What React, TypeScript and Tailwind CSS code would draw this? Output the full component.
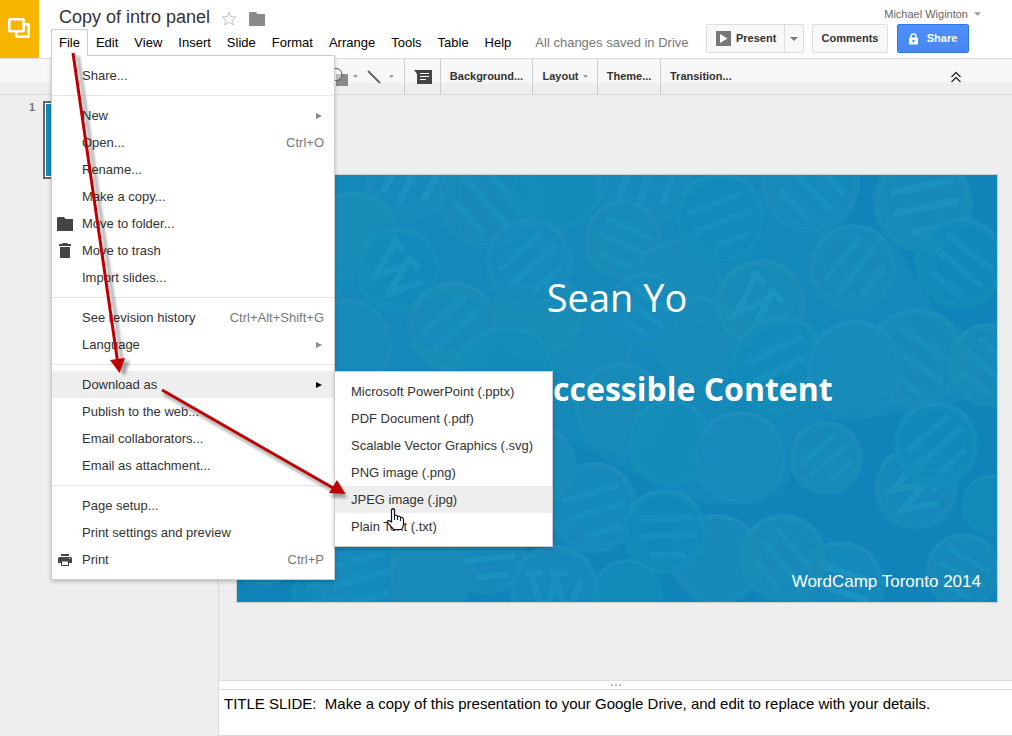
import type { ReactNode } from "react";

type MenuEntry = {
  label: string;
  shortcut?: string;
  icon?: ReactNode;
  submenu?: string[];
  arrow?: boolean;
};

const FolderIcon = ({ className }: { className: string }) => (
  <svg viewBox="0 0 16 14" className={className} fill="currentColor" aria-hidden="true">
    <path d="M0 1.5Q0 0 1.2 0H7L8.500 2H16V14H0Z" />
  </svg>
);

const TrashIcon = () => (
  <svg viewBox="0 0 12 15" className="h-[15px] w-3" fill="currentColor" aria-hidden="true">
    <path d="M0 1H3.500V0H8.500V1H12V3H0ZM1 4H11V15H1Z" />
  </svg>
);

const PrintIcon = () => (
  <svg viewBox="0 0 14 12" className="h-3 w-3.5" aria-hidden="true">
    <path d="M3 0H11V2H3ZM1.500 3H12.500Q14 3 14 4.500V9H11V7H3V9H0V4.500Q0 3 1.500 3Z" fill="#444" />
    <rect x="3.500" y="7" width="7" height="4.500" fill="#fff" stroke="#444" />
    <rect x="11" y="4" width="1" height="1" fill="#fff" />
  </svg>
);

const Caret = ({ className }: { className: string }) => (
  <svg viewBox="0 0 8 4" className={"shrink-0 " + className} fill="currentColor" aria-hidden="true">
    <path d="M0 0H8L4 4Z" />
  </svg>
);

const fileMenu: MenuEntry[][] = [
  [{ label: "Share..." }],
  [
    { label: "New", arrow: true },
    { label: "Open...", shortcut: "Ctrl+O" },
    { label: "Rename..." },
    { label: "Make a copy..." },
    { label: "Move to folder...", icon: <FolderIcon className="h-3.5 w-4" /> },
    { label: "Move to trash", icon: <TrashIcon /> },
    { label: "Import slides..." },
  ],
  [
    { label: "See revision history", shortcut: "Ctrl+Alt+Shift+G" },
    { label: "Language", arrow: true },
  ],
  [
    {
      label: "Download as",
      arrow: true,
      submenu: [
        "Microsoft PowerPoint (.pptx)",
        "PDF Document (.pdf)",
        "Scalable Vector Graphics (.svg)",
        "PNG image (.png)",
        "JPEG image (.jpg)",
        "Plain Text (.txt)",
      ],
    },
    { label: "Publish to the web..." },
    { label: "Email collaborators..." },
    { label: "Email as attachment..." },
  ],
  [
    { label: "Page setup..." },
    { label: "Print settings and preview" },
    { label: "Print", shortcut: "Ctrl+P", icon: <PrintIcon /> },
  ],
];

function MenuRow({ entry }: { entry: MenuEntry }) {
  const open = Boolean(entry.submenu);
  return (
    <li className="relative">
      <button
        type="button"
        className={"flex h-[27px] w-full items-center pr-2.5 text-left " + (open ? "bg-[#eee]" : "")}
      >
        <span className="flex w-[26px] justify-center text-[#444]">{entry.icon}</span>
        <span className="ml-1 flex-1 whitespace-nowrap">{entry.label}</span>
        {entry.shortcut && <span className="text-[#777]">{entry.shortcut}</span>}
        {entry.arrow && (
          <svg
            viewBox="0 0 6 6"
            className={"mr-0.5 size-1.5 " + (open ? "text-black" : "text-[#888]")}
            fill="currentColor"
            aria-hidden="true"
          >
            <path d="M0 0L6 3L0 6Z" />
          </svg>
        )}
      </button>
      {entry.submenu && (
        <ul className="absolute top-0 left-full z-10 w-[219px] border border-[#ccc] bg-white py-1.5 shadow-[0_2px_4px_rgba(0,0,0,0.2)]">
          {entry.submenu.map((label) => (
            <li key={label}>
              <button
                type="button"
                className={
                  "flex h-[27px] w-full items-center pl-4 text-left whitespace-nowrap " +
                  (label.startsWith("JPEG") ? "bg-[#eee]" : "")
                }
              >
                {label}
              </button>
            </li>
          ))}
        </ul>
      )}
    </li>
  );
}

function FileMenu() {
  return (
    <div className="absolute top-full -left-px -mt-px w-[284px] divide-y divide-[#e5e5e5] border border-[#ccc] bg-white text-[#333] shadow-[0_2px_4px_rgba(0,0,0,0.2)]">
      {fileMenu.map((group) => (
        <ul key={group[0].label} className="py-1.5">
          {group.map((entry) => (
            <MenuRow key={entry.label} entry={entry} />
          ))}
        </ul>
      ))}
    </div>
  );
}

const menus = ["Edit", "View", "Insert", "Slide", "Format", "Arrange", "Tools", "Table", "Help"];

function Header() {
  return (
    <header className="relative z-20 flex h-[59px] border-b border-[#d9d9d9] bg-white">
      <a href="#" aria-label="Slides home" className="flex h-[58px] w-[39px] shrink-0 bg-[#f7b500] pt-[18px] pl-2">
        <svg viewBox="0 0 22 20" className="h-5 w-[22px]" fill="none" stroke="#fff" strokeWidth="2.600" aria-hidden="true">
          <rect x="1.300" y="1.300" width="14.400" height="12" rx="1" />
          <path d="M17 6.300H19.700Q20.700 6.300 20.700 7.300V17.700Q20.700 18.700 19.700 18.700H9.300Q8.300 18.700 8.300 17.700V14" />
        </svg>
      </a>
      <div className="flex flex-1 flex-col pl-3">
        <div className="flex h-[29px] items-center pt-1 pl-2">
          <h1 className="text-[18px] leading-6 whitespace-nowrap text-[#333]">Copy of intro panel</h1>
          <button type="button" aria-label="Star" className="mt-1 ml-[11px]">
            <svg viewBox="0 0 16 15" className="h-[15px] w-4" fill="none" stroke="#c4c4c4" aria-hidden="true">
              <path d="M8 1L9.800 5.600L15 5.900L11 9.100L12.400 14L8 11.300L3.600 14L5 9.100L1 5.900L6.200 5.600Z" />
            </svg>
          </button>
          <button type="button" aria-label="Move to folder" className="mt-1 ml-3 text-[#8a8a8a]">
            <FolderIcon className="h-3.5 w-4" />
          </button>
        </div>
        <nav className="flex text-[13px] text-black">
          <div className="relative h-[27px] border border-b-0 border-[#ccc] bg-white">
            <button type="button" className="relative z-10 h-[26px] bg-white px-[7px]">
              File
            </button>
            <FileMenu />
          </div>
          {menus.map((name) => (
            <button key={name} type="button" className="h-[27px] px-2">
              {name}
            </button>
          ))}
          <span className="h-[27px] pl-4 leading-[27px] whitespace-nowrap text-[#777]">All changes saved in Drive</span>
        </nav>
      </div>
      <div className="flex flex-col pr-[31px]">
        <button type="button" className="flex h-6 items-center justify-end gap-1.5 pt-1 text-[11px] text-[#666]">
          Michael Wiginton
          <Caret className="h-1 w-[7px] text-[#999]" />
        </button>
        <div className="mr-3 flex h-[29px] text-[11px] font-bold text-[#333]">
          <button type="button" className="flex w-[79px] items-center gap-[5px] rounded-l-xs border border-[#dcdcdc] bg-[#f8f8f8] pl-[9px]">
            <svg viewBox="0 0 15 15" className="size-[15px] shrink-0" aria-hidden="true">
              <rect width="15" height="15" fill="#777" />
              <path d="M4 3L11.500 7.500L4 12Z" fill="#fff" />
            </svg>
            Present
          </button>
          <button
            type="button"
            aria-label="Presentation options"
            className="-ml-px flex w-5 items-center justify-center rounded-r-xs border border-[#dcdcdc] bg-[#f8f8f8]"
          >
            <Caret className="h-1 w-2 text-[#777]" />
          </button>
          <button type="button" className="ml-2 w-[76px] rounded-xs border border-[#dcdcdc] bg-[#f8f8f8]">
            Comments
          </button>
          <button
            type="button"
            className="ml-[9px] flex w-[72px] items-center justify-center gap-[9px] rounded-xs border border-[#3079ed] bg-linear-to-b from-[#4d90fe] to-[#4787ed] text-white"
          >
            <svg viewBox="0 0 9 12" className="h-3 w-[9px]" aria-hidden="true">
              <path d="M2 5V3.200Q2 1 4.500 1Q7 1 7 3.200V5" fill="none" stroke="#fff" strokeWidth="1.500" />
              <rect y="4.500" width="9" height="7" fill="#fff" />
              <circle cx="4.500" cy="8" r="1.200" fill="#4387f5" />
            </svg>
            Share
          </button>
        </div>
      </div>
    </header>
  );
}

function Toolbar() {
  return (
    <div className="flex h-9 items-stretch border-b border-[#d9d9d9] bg-linear-to-b from-[#f7f7f7] from-70% to-[#eee] to-70% pl-[331px] text-[11px] font-bold text-[#333] [&>button]:border-[#ccc]">
      <button type="button" aria-label="Shape" className="flex w-9 items-center gap-1">
        <svg viewBox="0 0 18 18" className="size-[18px]" aria-hidden="true">
          <rect x="5" y="6" width="12" height="12" fill="#8a8a8a" />
          <circle cx="5" cy="6.500" r="6" fill="#f7f7f7" fillOpacity="0.500" stroke="#555" />
        </svg>
        <Caret className="h-[3px] w-[5px] text-[#888]" />
      </button>
      <button type="button" aria-label="Line" className="flex w-[38px] items-center gap-2 border-r">
        <svg viewBox="0 0 14 14" className="size-3.5" aria-hidden="true">
          <path d="M1 1L13 13" stroke="#666" strokeWidth="2" />
        </svg>
        <Caret className="h-[3px] w-[5px] text-[#888]" />
      </button>
      <button type="button" aria-label="Insert comment" className="flex w-9 items-center justify-center border-r">
        <svg viewBox="0 0 18 14" className="h-3.5 w-[18px]" aria-hidden="true">
          <path d="M0 0H18V14H3V4Z" fill="#444" />
          <path d="M6 3.500H15M6 6.500H15M6 9.500H12" stroke="#fff" />
        </svg>
      </button>
      <button type="button" className="w-[92px] border-r">Background...</button>
      <button type="button" className="flex w-[65px] items-center justify-center gap-1 border-r">
        Layout
        <Caret className="h-[3px] w-[5px] text-[#888]" />
      </button>
      <button type="button" className="w-[63px] border-r">Theme...</button>
      <button type="button" className="px-[9px]">Transition...</button>
      <button type="button" aria-label="Hide the menus" className="mr-[50px] ml-auto">
        <svg viewBox="0 0 12 12" className="size-3" fill="none" stroke="#333" strokeWidth="1.500" aria-hidden="true">
          <path d="M1.500 6L6 1.500L10.500 6M1.500 11L6 6.500L10.500 11" />
        </svg>
      </button>
    </div>
  );
}

// Pin badges scattered over the slide: centre x, centre y, radius, tilt in degrees, face style.
const badges: [number, number, number, number, number][] = [
  [20, 30, 46, 20, 0],
  [60, 110, 46, -30, 1],
  [30, 200, 44, 60, 2],
  [70, 290, 46, 10, 1],
  [25, 370, 42, -40, 0],
  [98, 420, 44, 30, 1],
  [172, 0, 46, -20, 1],
  [118, 60, 44, 30, 2],
  [251, 22, 52, 90, 1],
  [320, 10, 46, 20, 2],
  [406, 4, 50, -30, 1],
  [386, 65, 40, 65, 1],
  [440, 110, 46, 20, 2],
  [483, 43, 46, 20, 1],
  [573, 8, 50, 85, 1],
  [686, 28, 50, 30, 1],
  [616, 93, 44, -10, 1],
  [723, 88, 46, 80, 1],
  [353, 167, 44, 10, 2],
  [300, 140, 46, -20, 2],
  [460, 165, 44, 25, 2],
  [161, 95, 43, 50, 0],
  [292, 88, 45, 0, 1],
  [216, 152, 46, 0, 1],
  [110, 170, 46, -20, 2],
  [270, 200, 50, -20, 2],
  [408, 135, 38, 75, 1],
  [524, 130, 46, 45, 0],
  [679, 183, 50, 75, 1],
  [543, 190, 50, 15, 1],
  [618, 195, 50, -20, 2],
  [752, 190, 42, 80, 1],
  [383, 233, 46, 20, 2],
  [433, 268, 44, 80, 2],
  [503, 283, 47, 20, 2],
  [589, 283, 37, 0, 1],
  [679, 313, 42, 60, 0],
  [699, 270, 43, 0, 1],
  [356, 333, 46, 25, 1],
  [300, 290, 40, 0, 2],
  [480, 385, 46, 70, 2],
  [428, 357, 43, 40, 1],
  [603, 412, 46, 60, 1],
  [546, 383, 44, 90, 1],
  [726, 396, 38, 70, 1],
  [754, 330, 30, -10, 2],
  [123, 400, 46, 25, 1],
  [195, 395, 44, -25, 2],
  [250, 380, 40, 35, 1],
  [390, 420, 36, 0, 2],
  [318, 416, 46, 0, 0],
];

const badgeFills = ["#198bb8", "#128cb8", "#188bbb", "#1b8cb7"];

const facePaths = [
  "M-30 -18H-12M-5 -18H13M-24 -16L-11 24L1 -10M-1 -16L13 24L27 -13",
  "M-31 7L13 -31M-19 22L27 -18M4 29L33 4",
  "",
];

function SlideArtwork() {
  return (
    <svg viewBox="0 0 760 427" preserveAspectRatio="xMidYMid slice" className="absolute inset-0 size-full" aria-hidden="true">
      <rect width="760" height="427" fill="#1084b8" />
      <path
        d="M0 0H590L615 60L660 70L700 140L735 160V225L650 240L570 250L545 320L470 330L400 300L330 265L250 300L0 330Z"
        fill="#178ab8"
        fillOpacity="0.600"
      />
      {badges.map(([x, y, r, tilt, face], i) => (
        <g key={i} transform={`translate(${x} ${y}) scale(${r / 46})`}>
          <circle r="46" fill={badgeFills[i % 4]} fillOpacity="0.750" />
          <circle r="42" fill="none" stroke="#2192be" strokeOpacity="0.350" strokeWidth="2" />
          <path d="M-38 -22A44 44 0 0 1 34 -28" fill="none" stroke="#2896c2" strokeOpacity="0.350" strokeWidth="4" />
          {face !== 2 && (
            <g transform={`rotate(${tilt})`}>
              <path d="M-30 22A37 37 0 1 1 30 22Z" fill="#1186ba" fillOpacity="0.250" />
              <path
                d={facePaths[face]}
                fill="none"
                stroke={i % 3 === 0 ? "#229ac4" : "#1b96c2"}
                strokeOpacity="0.500"
                strokeWidth="7"
              />
            </g>
          )}
        </g>
      ))}
    </svg>
  );
}

function Editor() {
  return (
    <div className="flex flex-1 bg-[#eee]">
      <aside className="flex w-[219px] shrink-0 gap-2 border-r border-[#d9d9d9] pt-1.5 pl-[29px]">
        <span className="text-[11px] leading-3 font-bold text-[#777]">1</span>
        <button type="button" aria-label="Slide 1" className="h-[78px] w-[136px] border-2 border-[#666] bg-white p-px">
          <span className="block size-full bg-[#1488b8]" />
        </button>
      </aside>
      <main className="flex min-w-0 flex-1 flex-col">
        <div className="flex flex-1 items-center pt-0.5 pr-[15px] pl-[18px]">
          <section className="relative flex aspect-[760/427] w-full flex-col items-center text-white shadow-[0_0_1px_1px_rgba(0,0,0,0.12)]">
            <SlideArtwork />
            <h2 className="relative mt-[94px] font-['Open_Sans',sans-serif] text-[38px] leading-14">Sean Yo</h2>
            <p className="relative mt-10 font-['Open_Sans',sans-serif] text-[32px] leading-12 font-bold whitespace-nowrap">
              Sharing Accessible Content
            </p>
            <p className="relative mt-auto mr-4 mb-2 self-end text-[17px] leading-6">WordCamp Toronto 2014</p>
          </section>
        </div>
        <div className="flex h-2.5 items-center justify-center gap-0.5 border-y border-[#ddd] bg-white">
          <i className="size-0.5 bg-[#bbb]" />
          <i className="size-0.5 bg-[#bbb]" />
          <i className="size-0.5 bg-[#bbb]" />
        </div>
        <textarea
          aria-label="Speaker notes"
          className="h-[46px] resize-none border-b border-[#d9d9d9] bg-white px-[5px] pt-1 text-[15px] leading-5 text-black outline-none"
          defaultValue={"TITLE SLIDE:  Make a copy of this presentation to your Google Drive, and edit to replace with your details."}
        />
      </main>
    </div>
  );
}

// Callout arrows and pointer laid over the open menus.
function Annotations() {
  return (
    <svg
      viewBox="0 0 420 560"
      className="pointer-events-none absolute top-0 left-0 z-30 h-[560px] w-[420px]"
      aria-hidden="true"
    >
      <defs>
        <filter id="soft" x="-30%" y="-30%" width="160%" height="160%">
          <feGaussianBlur stdDeviation="1.500" />
        </filter>
        <g id="steep">
          <path d="M73 53L117.500 361" strokeWidth="3" fill="none" />
          <path d="M110 360L125 358L119.500 373Z" stroke="none" />
        </g>
        <g id="shallow">
          <path d="M162 390L334 488.500" strokeWidth="3" fill="none" />
          <path d="M337 480L345.500 494L329 493Z" stroke="none" />
        </g>
      </defs>
      <g fill="#000" stroke="#000" opacity="0.350" filter="url(#soft)">
        <use href="#steep" x="5" y="3" />
        <use href="#shallow" x="2" y="4" />
      </g>
      <g fill="#c00000" stroke="#c00000">
        <use href="#steep" />
        <use href="#shallow" />
      </g>
      <path
        d="M391.500 509.500Q393 508 394.500 509.500V515.500Q396.500 514.500 397.500 516.500Q400 515.500 400.500 517.500Q403.500 517 403.500 520V524Q403.500 527 401.500 529.500H393.500L387.500 522.500Q387 519 391.500 522Z"
        fill="#fff"
        stroke="#112"
        strokeWidth="1.200"
      />
      <path d="M394.500 515V520M397.500 517V520M400.500 518V521" stroke="#112" />
    </svg>
  );
}

export default function App() {
  return (
    <div className="relative flex min-h-screen flex-col overflow-hidden bg-white font-['Liberation_Sans',Arial,sans-serif]">
      <Header />
      <Toolbar />
      <Editor />
      <Annotations />
    </div>
  );
}
